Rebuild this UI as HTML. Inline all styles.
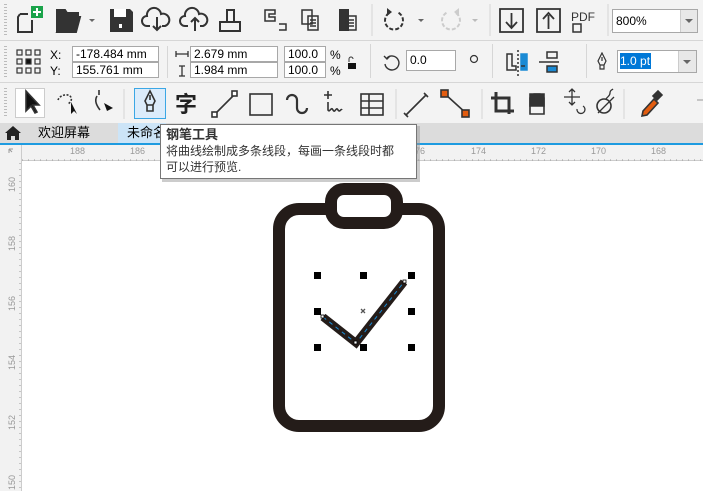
<!DOCTYPE html>
<html><head><meta charset="utf-8"><style>
*{margin:0;padding:0;box-sizing:border-box}
body{width:703px;height:491px;overflow:hidden;background:#fff;font-family:"Liberation Sans","Noto Sans CJK SC",sans-serif;position:relative}
.a{position:absolute}
.bar{background:#f3f3f3;left:0;width:703px}
.hl{height:1px;background:#d6d6d6;left:0;width:703px}
.vs{width:1px;background:#d6d6d6}
.inp{background:#fff;border:1px solid #a8a8a8;font-size:12px;line-height:14px;padding-left:3px;color:#000}
.t{font-size:12px;color:#000}
.grip{width:3px;background:repeating-linear-gradient(#bbb 0 1px,transparent 1px 3px)}
.r{font-size:9px;color:#999}
.h{width:7px;height:7px;background:#000}
</style></head><body>
<div class="a bar" style="top:0;height:123px"></div>
<div class="a hl" style="top:40px"></div>
<div class="a hl" style="top:82px"></div>
<div class="a grip" style="left:4px;top:4px;height:32px"></div>
<div class="a grip" style="left:4px;top:46px;height:32px"></div>
<div class="a grip" style="left:4px;top:88px;height:30px"></div>

<!-- row1 icons -->
<svg class="a" style="left:0;top:0" width="703" height="40" fill="none" stroke="#333" stroke-width="2">
<path d="M20 14h8M20 14l-2 3v15h14v-12"/><rect x="31" y="6" width="12" height="12" fill="#1aa34a" stroke="none"/><path d="M37 8v8M33 12h8" stroke="#fff"/>
<path d="M57 32V10h8l2 3h11v4M57 32l5-15h18l-4 15z" fill="#333"/><path d="M89 19l3 3 3-3z" fill="#666" stroke="none"/>
<path d="M110 9h20l3 3v20h-23z" fill="#333" stroke="none"/><rect x="114" y="9" width="12" height="8" fill="#fff" stroke="none"/><rect x="119" y="24" width="3" height="4" fill="#fff" stroke="none"/>
<path d="M150 26h-3a5 5 0 0 1 0-10a7 7 0 0 1 14-2a5 5 0 0 1 4 12h-3M157 17v13M153 26l4 4 4-4"/>
<path d="M188 26h-3a5 5 0 0 1 0-10a7 7 0 0 1 14-2a5 5 0 0 1 4 12h-3M195 31v-13M191 22l4-4 4 4"/>
<path d="M227 22v-12h7v12M220 22h20v9h-20z"/>
<path d="M265 10h10v4h-6v3h6v4h-10zM279 24h7v6h-7" stroke-width="1.5"/>
<path d="M302 10h10v14h-10zM308 16h10v14h-10zM310 20h6M310 23h6M310 26h6" stroke-width="1.5"/>
<path d="M340 10h8v20h-8z" fill="#333"/><path d="M346 16h10v14h-10zM348 20h6M348 23h6M348 26h6" stroke-width="1.5"/>
<path d="M372 4v32M490 4v32M608 4v32" stroke="#d6d6d6" stroke-width="1"/>
<path d="M389 13a9 9 0 1 0 8-1" stroke-dasharray="4 2"/><path d="M387 8l5 4-5 4z" fill="#333" stroke="none"/><path d="M418 19l3 3 3-3z" fill="#666" stroke="none"/>
<path d="M456 13a9 9 0 1 1-8-1" stroke="#ccc" stroke-dasharray="4 2"/><path d="M459 8l-5 4 5 4z" fill="#ccc" stroke="none"/><path d="M472 19l3 3 3-3z" fill="#bbb" stroke="none"/>
<path d="M500 9h23v23h-23zM511.5 13v14M506 22l5.5 6 5.5-6" stroke-width="1.8"/>
<path d="M537 9h23v23h-23zM548.5 29v-14M543 19l5.5-6 5.5 6" stroke-width="1.8"/>
<text x="571" y="21" font-size="12" font-family="Liberation Sans" fill="#333" stroke="none">PDF</text><path d="M573 24h8v8h-8z" stroke-width="1.5"/>
</svg>
<div class="a inp" style="left:612px;top:9px;width:86px;height:24px;line-height:22px;font-size:12px">800%</div>
<div class="a" style="left:680px;top:10px;width:17px;height:22px;background:#e8e8e8;border-left:1px solid #ccc"></div>
<svg class="a" style="left:684px;top:18px" width="10" height="6"><path d="M1 1l4 4 4-4z" fill="#666"/></svg>

<!-- row2 -->
<svg class="a" style="left:16px;top:49px" width="26" height="26" fill="none" stroke="#333" stroke-width="1.2">
<rect x="1" y="1" width="5" height="5"/><rect x="10" y="1" width="5" height="5"/><rect x="19" y="1" width="5" height="5"/>
<rect x="1" y="10" width="5" height="5"/><rect x="10" y="10" width="5" height="5" fill="#111"/><rect x="19" y="10" width="5" height="5"/>
<rect x="1" y="19" width="5" height="5"/><rect x="10" y="19" width="5" height="5"/><rect x="19" y="19" width="5" height="5"/></svg>
<div class="a t" style="left:50px;top:47px;line-height:16px">X:<br>Y:</div>
<div class="a inp" style="left:72px;top:46px;width:87px;height:16px">-178.484 mm</div>
<div class="a inp" style="left:72px;top:62px;width:87px;height:16px">155.761 mm</div>
<div class="a vs" style="left:123px;top:0"></div>
<div class="a vs" style="left:167px;top:46px;height:32px"></div>
<svg class="a" style="left:175px;top:48px" width="14" height="30" stroke="#333" stroke-width="1.3"><path d="M1 6h12M1 3v6M13 3v6M7 18v10M4 18h6M4 28h6"/></svg>
<div class="a inp" style="left:190px;top:46px;width:88px;height:16px">2.679 mm</div>
<div class="a inp" style="left:190px;top:62px;width:88px;height:16px">1.984 mm</div>
<div class="a inp" style="left:284px;top:46px;width:42px;height:16px">100.0</div>
<div class="a inp" style="left:284px;top:62px;width:42px;height:16px">100.0</div>
<div class="a t" style="left:330px;top:47px;line-height:16px">%<br>%</div>
<svg class="a" style="left:346px;top:56px" width="12" height="14"><path d="M3 6V3a2 2 0 0 1 4 0" stroke="#333" fill="none"/><rect x="2" y="7" width="8" height="6" fill="#111"/></svg>
<div class="a vs" style="left:370px;top:44px;height:34px"></div>
<svg class="a" style="left:383px;top:53px" width="18" height="18" fill="none" stroke="#333" stroke-width="1.4"><path d="M4 5a7 7 0 1 1-2 6"/><path d="M1 3l3 3 3-3" /></svg>
<div class="a inp" style="left:406px;top:50px;width:50px;height:21px;line-height:19px">0.0</div>
<svg class="a" style="left:469px;top:54px" width="10" height="10"><circle cx="5" cy="5" r="3.5" fill="none" stroke="#333" stroke-width="1.2"/></svg>
<div class="a vs" style="left:492px;top:44px;height:34px"></div>
<svg class="a" style="left:505px;top:50px" width="60" height="26" fill="none" stroke="#333" stroke-width="1.5">
<path d="M2 4h5v12h4v4h-9z"/><path d="M13 0v26" stroke-dasharray="2 2"/><path d="M16 4h6v16h-6z" fill="#1a8ad4" stroke="#1a8ad4"/><path d="M16 16h4" stroke="#333"/>
<path d="M42 2h10v6h-10zM34 12h20" /><path d="M42 16h10v6h-10z" fill="#1a8ad4" stroke="#333"/></svg>
<div class="a vs" style="left:586px;top:44px;height:34px"></div>
<svg class="a" style="left:596px;top:52px" width="12" height="20" fill="none" stroke="#333" stroke-width="1.2"><path d="M6 1l4 8-2 4H4L2 9zM6 5v4M4 13v4h4v-4"/></svg>
<div class="a" style="left:617px;top:50px;width:80px;height:23px;background:#fff;border:1px solid #a8a8a8"></div>
<div class="a" style="left:620px;top:53px;width:31px;height:16px;background:#0078d7;color:#fff;font-size:12px;line-height:16px">1.0 pt</div>
<div class="a" style="left:678px;top:51px;width:18px;height:21px;background:#e8e8e8;border-left:1px solid #ccc"></div>
<svg class="a" style="left:682px;top:59px" width="10" height="6"><path d="M1 1l4 4 4-4z" fill="#666"/></svg>

<!-- row3 -->
<div class="a" style="left:15px;top:88px;width:30px;height:30px;background:#fff;border:1px solid #ccc"></div>
<div class="a" style="left:134px;top:88px;width:32px;height:31px;background:#dcecfb;border:1px solid #3ba7e5"></div>
<svg class="a" style="left:0;top:84px" width="703" height="38" fill="none" stroke="#333" stroke-width="1.6">
<path d="M26 7v20l5-5 4 7 2-1-4-7h6z" fill="#111"/>
<path d="M58 16a7 5 -20 1 1 10 4" stroke-dasharray="2 1.5"/><path d="M71 18v12l3-3 3 3z" fill="#111" stroke="none"/>
<path d="M99 6v5M97 12c-3 5 0 10 3 14" /><path d="M104 19l9 5-6 3z" fill="#111" stroke="none"/>
<path d="M124 5v30" stroke="#d6d6d6" stroke-width="1"/>
<path d="M150 7l5 10-2 4h-6l-2-4zM150 11v5M147 21v6h6v-6"/>
<text x="175" y="28" font-size="22" font-weight="bold" fill="#222" stroke="none" font-family="Noto Sans CJK SC">字</text>
<path d="M214 31l20-20"/><rect x="212" y="28" width="5" height="5" fill="#fff"/><rect x="232" y="7" width="5" height="5" fill="#fff"/>
<rect x="250" y="10" width="22" height="21"/>
<path d="M287 16a5 5 0 0 1 10 0v8a5 5 0 0 0 10 0" stroke-width="2.2"/>
<path d="M328 7v8M324 11h8M328 18v8c2 3 3-4 5 0 2 4 3-4 5 0 2 3 3-2 4 0"/>
<rect x="361" y="10" width="22" height="21"/><path d="M361 17h22M361 24h22M369 10v21"/>
<path d="M396 5v30M482 5v30M624 5v30" stroke="#d6d6d6" stroke-width="1"/>
<path d="M406 31l20-20M404 29l4 4M424 9l4 4"/>
<path d="M445 10l22 20"/><rect x="441" y="6" width="7" height="7" fill="#e25c0f"/><rect x="462" y="26" width="7" height="7" fill="#e25c0f"/>
<path d="M491 14h18v16M496 8v19h18" stroke-width="3"/>
<path d="M530 14a4 4 0 0 1 4-4h6a4 4 0 0 1 4 4v16h-14z"/><path d="M530 10h14v12h-14z" fill="#333"/>
<path d="M572 5v16M564 13h16M569 8l3-3 3 3M569 18l3 3 3-3" stroke-width="1.3"/><path d="M577 25a4 4 0 1 0 6-3" stroke-width="1.3"/>
<circle cx="604" cy="22" r="7"/><path d="M598 29l16-16M606 15c2-3 4-3 4-6s2-3 3-4" stroke-width="1.3"/>
<path d="M643 27l11-12 4 4-11 12-5 1z" fill="#e25c0f" stroke="#333"/><path d="M653 12l5-5 4 4-5 5z" fill="#333"/>
<path d="M697 16h6" stroke="#bbb"/>
</svg>

<!-- tabs -->
<div class="a" style="left:0;top:123px;width:703px;height:20px;background:#dcdcdc"></div>
<svg class="a" style="left:5px;top:126px" width="16" height="14"><path d="M8 0L0 7h2v7h4v-4h4v4h4V7h2z" fill="#222"/></svg>
<div class="a" style="left:38px;top:124px;font-size:13px;line-height:18px;color:#000">欢迎屏幕</div>
<div class="a" style="left:118px;top:123px;width:48px;height:20px;background:#cce4f7"></div>
<div class="a" style="left:127px;top:124px;font-size:13px;line-height:18px;color:#000">未命名</div>
<div class="a" style="left:0;top:143px;width:703px;height:2px;background:#1e9be0"></div>

<!-- rulers -->
<div class="a" style="left:0;top:145px;width:703px;height:16px;background:#f2f2f2;border-bottom:1px solid #ccc"></div>
<div class="a" style="left:0;top:145px;width:22px;height:346px;background:#f2f2f2;border-right:1px solid #ccc"></div>
<svg class="a" style="left:0;top:145px" width="703" height="346">
<g fill="#999" font-size="9" font-family="Liberation Sans">
<text x="70" y="9">188</text><text x="130" y="9">186</text><text x="410" y="9">176</text><text x="471" y="9">174</text><text x="531" y="9">172</text><text x="591" y="9">170</text><text x="651" y="9">168</text>
<text transform="translate(15,47) rotate(-90)">160</text><text transform="translate(15,106) rotate(-90)">158</text><text transform="translate(15,166) rotate(-90)">156</text><text transform="translate(15,225) rotate(-90)">154</text><text transform="translate(15,285) rotate(-90)">152</text><text transform="translate(15,345) rotate(-90)">150</text>
</g>
<path d="M22 15H703" stroke="#999" stroke-width="1" stroke-dasharray="1 5"/>
<path d="M20 18V346" stroke="#999" stroke-width="1" stroke-dasharray="1 5"/>
<path d="M9 4l3 3M9 4v4M9 4h4" stroke="#999"/>
</svg>

<!-- drawing -->
<svg class="a" style="left:0;top:0" width="703" height="491">
<rect x="279" y="209" width="160" height="217" rx="20" fill="none" stroke="#241c19" stroke-width="12"/>
<rect x="331" y="189" width="66" height="34" rx="13" fill="#fff" stroke="#241c19" stroke-width="12"/>
<g fill="#000"><rect x="314" y="272" width="7" height="7"/><rect x="360" y="272" width="7" height="7"/><rect x="408" y="272" width="7" height="7"/>
<rect x="314" y="308" width="7" height="7"/><rect x="408" y="308" width="7" height="7"/>
<rect x="314" y="344" width="7" height="7"/><rect x="360" y="344" width="7" height="7"/><rect x="408" y="344" width="7" height="7"/></g>
<path d="M323 317l33 26 48-61" fill="none" stroke="#241c19" stroke-width="8"/>
<path d="M323 317l33 26 48-61" fill="none" stroke="#1a8ad4" stroke-width="1" stroke-dasharray="4 4"/>
<path d="M361 309l4 4M365 309l-4 4" stroke="#555" stroke-width="1.3"/>
<rect x="321" y="315" width="3" height="3" fill="#fff" stroke="#000" stroke-width="0.8"/>
<rect x="354" y="341" width="3" height="3" fill="#fff" stroke="#000" stroke-width="0.8"/>
<rect x="403" y="280" width="3" height="3" fill="#fff" stroke="#000" stroke-width="0.8"/>
</svg>

<!-- tooltip -->
<div class="a" style="left:162px;top:126px;width:258px;height:56px;background:#999;opacity:.5"></div>
<div class="a" style="left:160px;top:124px;width:257px;height:55px;background:#fff;border:1px solid #767676;padding:2px 5px;font-size:12px;line-height:16px;color:#333">
<div style="font-weight:bold;font-size:13px">钢笔工具</div>
<div>将曲线绘制成多条线段，每画一条线段时都</div>
<div>可以进行预览.</div></div>
</body></html>
